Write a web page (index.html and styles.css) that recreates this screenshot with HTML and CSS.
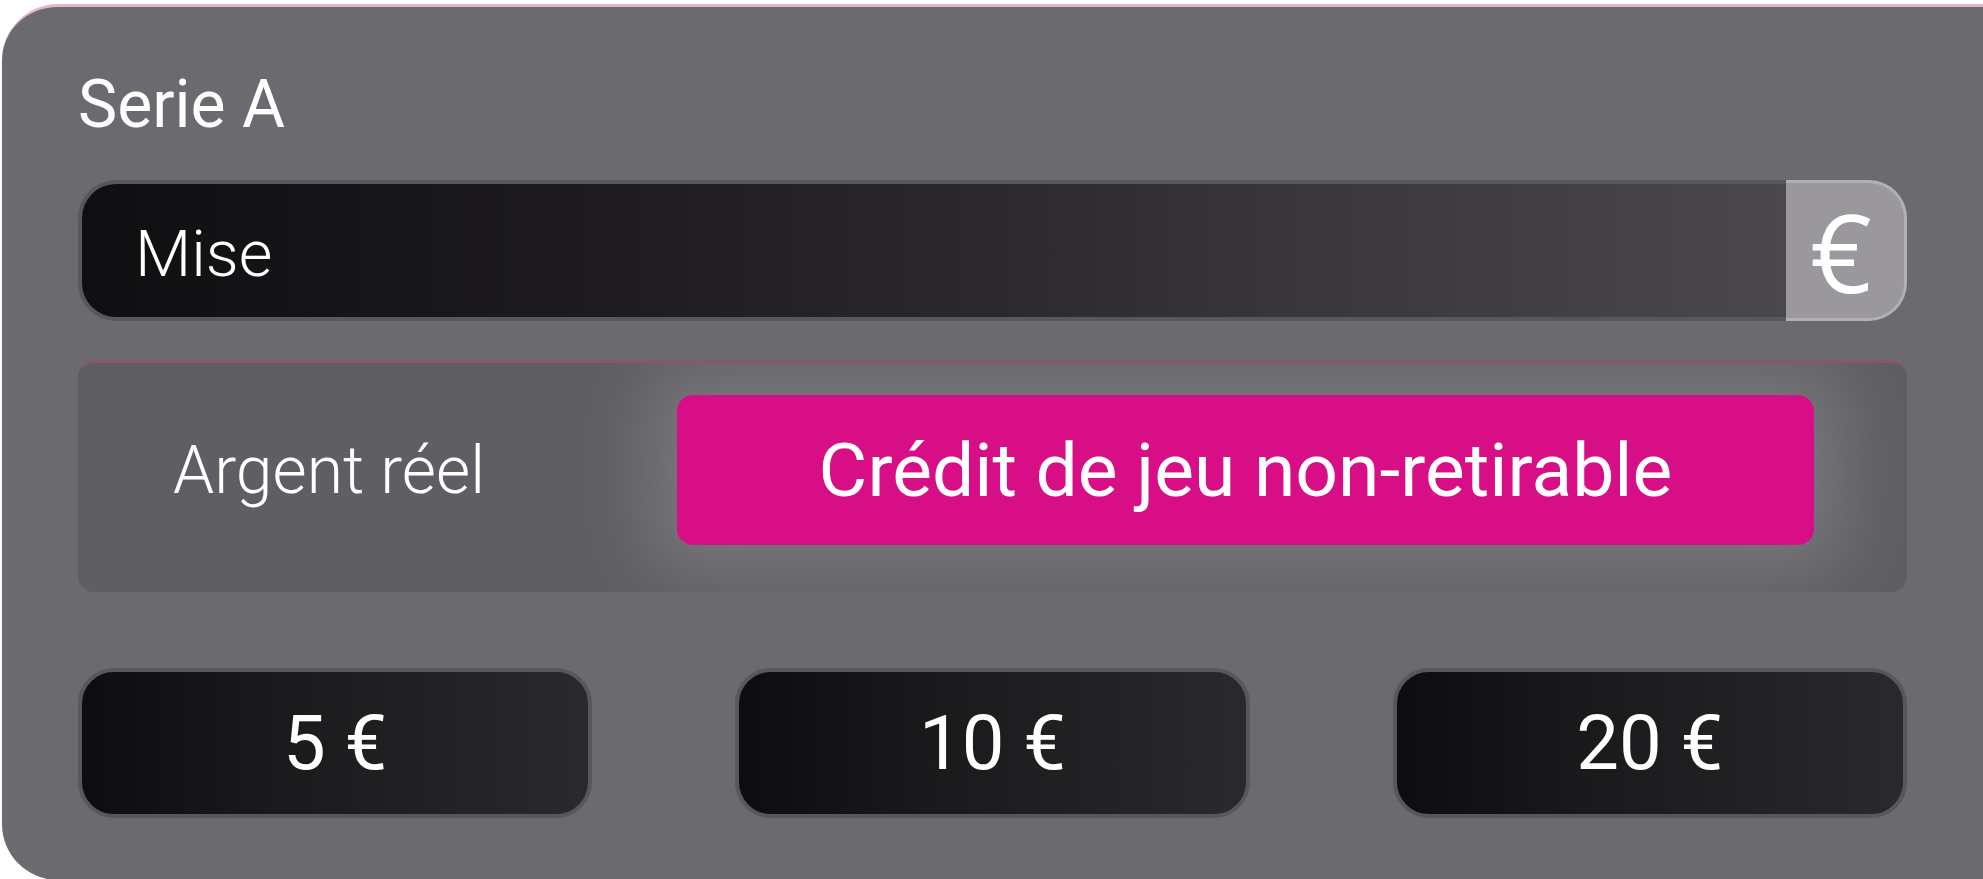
FILE: index.html
```html
<!DOCTYPE html>
<html lang="fr">
<head>
  <meta charset="UTF-8">
  <meta name="viewport" content="width=device-width, initial-scale=1.0">
  <title>Serie A - Mise</title>
  <link rel="stylesheet" href="styles.css">
</head>
<body>
  <div class="card">
    <div class="content">
      <h1 class="title">Serie A</h1>

      <div class="stake">
        <div class="stake-input">Mise</div>
        <div class="stake-currency">€</div>
      </div>

      <div class="wallet">
        <div class="wallet-option">Argent réel</div>
        <button class="wallet-option active">Crédit de jeu non-retirable</button>
      </div>

      <div class="amounts">
        <button class="amount">5 €</button>
        <button class="amount">10 €</button>
        <button class="amount">20 €</button>
      </div>
    </div>
  </div>
</body>
</html>
```

FILE: styles.css
```css
html, body {
  margin: 0;
  padding: 0;
  background: #ffffff;
  overflow: hidden;
}
body {
  font-family: Roboto, 'Noto Sans', sans-serif;
  color: #ffffff;
}
.card {
  box-sizing: border-box;
  width: calc(100% - 2px);
  height: 876px;
  margin: 4px 0 0 2px;
  padding: 65px 0 0 76px;
  background: #6b6a6f;
  border-top: 3px solid #e2b6d0;
  border-radius: 56px 0 0 56px;
}
.content {
  width: 1829px;
}
.title {
  margin: 0;
  font-size: 66px;
  font-weight: 400;
  line-height: 66px;
}

/* champ mise */
.stake {
  display: flex;
  height: 141px;
  margin-top: 42px;
}
.stake-input {
  flex: 1;
  display: flex;
  align-items: center;
  padding: 7px 0 0 53px;
  font-size: 65px;
  font-weight: 300;
  background: linear-gradient(90deg, #0f0e11 0%, #1d1b1f 30%, #2c2a2f 55%, #38353b 70%, #4a484d 100%);
  border: 4px solid #58575c;
  border-right: none;
  border-radius: 38px 0 0 38px;
}
.stake-currency {
  box-sizing: border-box;
  width: 121px;
  display: flex;
  align-items: center;
  justify-content: center;
  padding: 2px 8px 0 0;
  font-size: 108px;
  font-weight: 400;
  line-height: 1;
  font-family: 'Open Sans', Roboto, sans-serif;
  background: #9a989c;
  border: 3px solid #b2b0b4;
  border-left: none;
  border-radius: 0 38px 38px 0;
}

/* choix du solde */
.wallet {
  display: grid;
  grid-template-columns: 504px 1fr;
  align-items: center;
  height: 232px;
  box-sizing: border-box;
  margin-top: 39px;
  padding: 32px 93px 47px 95px;
  background: #5f5e63;
  border-top: 3px solid #87576f;
  border-radius: 16px;
  overflow: hidden;
}
.wallet-option {
  font-family: inherit;
  font-size: 66px;
  font-weight: 300;
  color: #ffffff;
}
.wallet-option.active {
  height: 150px;
  border: none;
  border-radius: 16px;
  background: #d80e86;
  font-size: 75px;
  font-weight: 400;
  box-shadow: 0 0 70px 30px rgba(128, 127, 131, 0.75);
}

/* montants rapides */
.amounts {
  display: grid;
  grid-template-columns: repeat(3, 1fr);
  gap: 143px;
  margin-top: 76px;
}
.amount {
  height: 150px;
  font-family: inherit;
  font-size: 76px;
  font-weight: 400;
  color: #ffffff;
  background: linear-gradient(90deg, #0d0d0f 0%, #19181b 35%, #222124 70%, #2a292d 100%);
  border: 4px solid #58575c;
  border-radius: 36px;
  cursor: pointer;
}
```
